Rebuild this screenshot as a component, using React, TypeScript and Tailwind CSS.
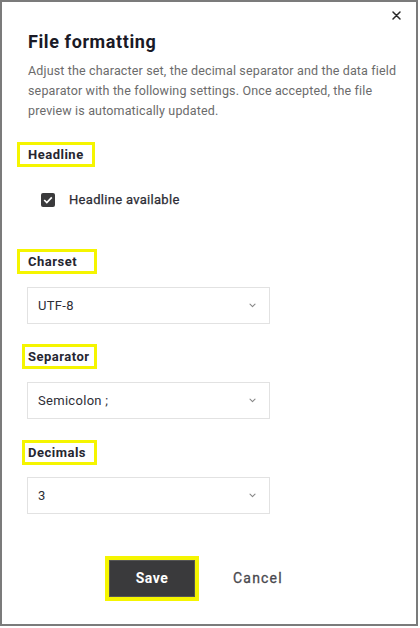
import React, { useState } from "react";

const font = { fontFamily: "Roboto, 'Liberation Sans', sans-serif" };

interface SelectFieldProps {
  value: string;
}

const Chevron = () => (
  <svg width="7" height="5" viewBox="0 0 7 5" fill="none">
    <path d="M1 1.2l2.5 2.4L6 1.2" stroke="#888" strokeWidth="1.1" strokeLinecap="round" strokeLinejoin="round" />
  </svg>
);

const SelectField: React.FC<SelectFieldProps> = ({ value }) => (
  <div className="ml-[25px] flex h-[37px] w-[243px] items-center justify-between border border-[#e2e2e2] bg-white pl-[10px] pr-[13px]">
    <span className="text-[13px] tracking-[0.3px] text-[#2e2e36]">{value}</span>
    <Chevron />
  </div>
);

// Field label with the yellow callout frame around it
const Label: React.FC<{ text: string; width: string; offset: string; pad: string }> = ({
  text,
  width,
  offset,
  pad,
}) => (
  <div
    className={`flex h-[25px] items-center border-[3px] border-[#f5f500] ${width} ${offset} ${pad}`}
  >
    <span className="text-[13px] font-bold leading-none tracking-[0.5px] text-[#262630]">{text}</span>
  </div>
);

const App: React.FC = () => {
  const [checked, setChecked] = useState<boolean>(true);

  return (
    <div style={font} className="h-[628px] w-[420px] bg-white">
      <div className="relative h-[626px] w-[418px] border-2 border-[#7b7b7b] bg-white">
        <div className="flex h-[28px] justify-end pr-[15px] pt-[9px]">
          <svg width="9" height="9" viewBox="0 0 9 9">
            <path d="M1 1l7 7M8 1L1 8" stroke="#2a2a2a" strokeWidth="1.5" strokeLinecap="round" />
          </svg>
        </div>

        <h2 className="ml-[26px] text-[18px] font-bold leading-[24px] tracking-[0.6px] text-[#1a1a26]">
          File formatting
        </h2>
        <p className="ml-[26px] mr-[14px] mt-[7px] text-[12.5px] leading-[20px] tracking-[0.15px] text-[#6b6b6b]">
          Adjust the character set, the decimal separator and the data field separator with the
          following settings. Once accepted, the file preview is automatically updated.
        </p>

        <div className="mt-[21px]">
          <Label text="Headline" width="w-[78px]" offset="ml-[15px]" pad="pl-[8px]" />
        </div>

        <label className="ml-[39px] mt-[23px] flex h-[20px] items-center gap-[14px]">
          <button
            type="button"
            onClick={() => setChecked(!checked)}
            className="flex h-[14px] w-[14px] items-center justify-center rounded-[2px] bg-[#3a3a3c]"
          >
            {checked && (
              <svg width="10" height="8" viewBox="0 0 10 8" fill="none">
                <path d="M1.2 4l2.6 2.6L8.8 1.4" stroke="white" strokeWidth="1.7" />
              </svg>
            )}
          </button>
          <span className="text-[13px] font-normal tracking-[0.3px] text-[#2c2c34] [-webkit-text-stroke:0.25px_#2c2c34]">
            Headline available
          </span>
        </label>

        <div className="mt-[39px]">
          <Label text="Charset" width="w-[80px]" offset="ml-[15px]" pad="pl-[8px]" />
        </div>
        <div className="mt-[13px]">
          <SelectField value="UTF-8" />
        </div>

        <div className="mt-[20px]">
          <Label text="Separator" width="w-[75px]" offset="ml-[20px]" pad="pl-[3px]" />
        </div>
        <div className="mt-[13px]">
          <SelectField value="Semicolon ;" />
        </div>

        <div className="mt-[21px]">
          <Label text="Decimals" width="w-[75px]" offset="ml-[20px]" pad="pl-[3px]" />
        </div>
        <div className="mt-[12px]">
          <SelectField value="3" />
        </div>

        <div className="ml-[103px] mt-[42px] flex items-center">
          <div className="border-4 border-[#f5f500]">
            <button
              type="button"
              className="flex h-[37px] w-[86px] items-center justify-center border border-[#555] bg-[#3a3a3c] text-[14px] font-bold tracking-[0.5px] text-white"
            >
              Save
            </button>
          </div>
          <button
            type="button"
            className="ml-[34px] text-[14px] font-normal tracking-[1.2px] text-[#48484e] [-webkit-text-stroke:0.3px_#48484e]"
          >
            Cancel
          </button>
        </div>
      </div>
    </div>
  );
};

export default App;
